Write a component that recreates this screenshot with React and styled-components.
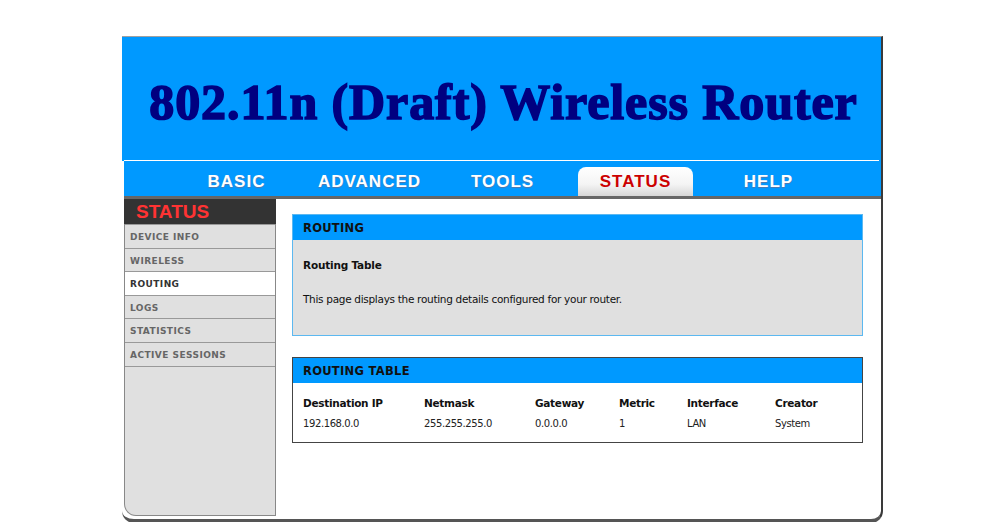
import React from "react";
import styled, { createGlobalStyle } from "styled-components";

const GlobalStyle = createGlobalStyle`
  body {
    margin: 0;
    background: #ffffff;
    font-family: "Liberation Sans", Arial, sans-serif;
  }
`;

const navItems = ["BASIC", "ADVANCED", "TOOLS", "STATUS", "HELP"];
const sideItems = [
  "DEVICE INFO",
  "WIRELESS",
  "ROUTING",
  "LOGS",
  "STATISTICS",
  "ACTIVE SESSIONS",
];
const columns = ["Destination IP", "Netmask", "Gateway", "Metric", "Interface", "Creator"];
const widths = [121, 111, 84, 68, 88, 76];
const routes = [["192.168.0.0", "255.255.255.0", "0.0.0.0", "1", "LAN", "System"]];

function App() {
  return (
    <>
      <GlobalStyle />
      <Page>
        <Frame>
          <Header>
            <Title>802.11n (Draft) Wireless Router</Title>
          </Header>
          <Divider />
          <Nav>
            {navItems.map((item) => (
              <NavItem key={item}>
                <NavLabel $active={item === "STATUS"}>{item}</NavLabel>
              </NavItem>
            ))}
          </Nav>
          <Body>
            <Sidebar>
              <SideTitle>STATUS</SideTitle>
              {sideItems.map((item) => (
                <SideItem key={item} $active={item === "ROUTING"}>
                  {item}
                </SideItem>
              ))}
            </Sidebar>
            <Main>
              <Box $variant="info">
                <BoxHead>ROUTING</BoxHead>
                <InfoBody>
                  <Strong>Routing Table</Strong>
                  <Text>This page displays the routing details configured for your router.</Text>
                </InfoBody>
              </Box>
              <Box $variant="table">
                <BoxHead>ROUTING TABLE</BoxHead>
                <TableBody>
                  <Table>
                    <colgroup>
                      {widths.map((w, i) => (
                        <col key={i} style={{ width: w }} />
                      ))}
                    </colgroup>
                    <thead>
                      <tr>
                        {columns.map((c) => (
                          <Th key={c}>{c}</Th>
                        ))}
                      </tr>
                    </thead>
                    <tbody>
                      {routes.map((r, i) => (
                        <tr key={i}>
                          {r.map((v, j) => (
                            <Td key={j}>{v}</Td>
                          ))}
                        </tr>
                      ))}
                    </tbody>
                  </Table>
                </TableBody>
              </Box>
            </Main>
          </Body>
        </Frame>
      </Page>
    </>
  );
}

const Page = styled.div`
  padding: 36px 0 0 122px;
  width: 762px;
`;

const Frame = styled.div`
  width: 761px;
  background: #ffffff;
  border-top: 1px solid #a0a0a0;
  border-right: 2px solid #3a3a3a;
  border-bottom: 4px solid #555;
  border-radius: 0 0 12px 12px;
  box-sizing: border-box;
`;

const Header = styled.div`
  height: 123px;
  background: #0099ff;
  display: flex;
  align-items: center;
  justify-content: center;
  padding-top: 6px;
  box-sizing: border-box;
`;

const Title = styled.h1`
  margin: 0 0 0 4px;
  font-family: "Liberation Serif", "Times New Roman", serif;
  font-weight: 900;
  font-size: 50px;
  letter-spacing: 0.9px;
  color: #000080;
  -webkit-text-stroke: 1.6px #000080;
  white-space: nowrap;
`;

const Divider = styled.div`
  height: 1px;
  background: #0099ff;
  padding: 0 2px;
  &::before {
    content: "";
    display: block;
    height: 1px;
    background: #ffffff;
  }
`;

const Nav = styled.div`
  height: 35px;
  background: #0099ff;
  display: flex;
  align-items: flex-end;
  padding-left: 46px;
  border-bottom: 3px solid #666;
  margin-left: 2px;
`;

const NavItem = styled.div`
  width: 133px;
  height: 29px;
  display: flex;
  justify-content: center;
`;

const NavLabel = styled.div`
  width: 115px;
  height: 29px;
  line-height: 30px;
  text-align: center;
  font-family: "Liberation Sans", Arial, sans-serif;
  font-weight: bold;
  font-size: 17px;
  letter-spacing: 1px;
  border-radius: 8px 8px 0 0;
  color: ${(p) => (p.$active ? "#cc0000" : "#ffffff")};
  background: ${(p) =>
    p.$active ? "linear-gradient(#ffffff 0%, #f4f4f4 60%, #d6d6d6 100%)" : "transparent"};
  text-shadow: ${(p) => (p.$active ? "none" : "0 1px 1px #5577aa")};
`;

const Body = styled.div`
  display: flex;
  padding-left: 2px;
  height: 320px;
`;

const Sidebar = styled.div`
  width: 152px;
  height: 317px;
  background: #e0e0e0;
  border: 1px solid #888;
  border-top: none;
  border-radius: 0 0 0 12px;
  box-sizing: border-box;
`;

const SideTitle = styled.div`
  height: 25px;
  background: #333333;
  color: #ff3333;
  font-family: "Liberation Sans", Arial, sans-serif;
  font-weight: bold;
  font-size: 19px;
  line-height: 25px;
  padding-left: 12px;
  margin: 0 -1px;
`;

const SideItem = styled.div`
  height: 22.6px;
  line-height: 24px;
  border-top: 1px solid #999;
  background: ${(p) => (p.$active ? "#ffffff" : "#e0e0e0")};
  color: ${(p) => (p.$active ? "#333" : "#666")};
  font-family: "DejaVu Sans", Verdana, sans-serif;
  font-weight: bold;
  font-size: 9px;
  letter-spacing: 0.45px;
  padding-left: 5px;
  &:last-child {
    border-bottom: 1px solid #999;
  }
`;

const Main = styled.div`
  flex: 1;
  padding: 15px 16px 0 16px;
  display: flex;
  flex-direction: column;
  gap: 21px;
`;

const Box = styled.div`
  width: 571px;
  border: 1px solid ${(p) => (p.$variant === "info" ? "#5cb8f0" : "#444")};
  background: ${(p) => (p.$variant === "info" ? "#e0e0e0" : "#ffffff")};
  box-sizing: border-box;
`;

const BoxHead = styled.div`
  height: 25px;
  line-height: 27px;
  background: #0099ff;
  color: #111;
  font-family: "DejaVu Sans", Tahoma, sans-serif;
  font-weight: bold;
  font-size: 11.5px;
  letter-spacing: 0.3px;
  padding-left: 10px;
`;

const InfoBody = styled.div`
  height: 95px;
  padding: 19px 10px 0;
  box-sizing: border-box;
`;

const Strong = styled.div`
  font-family: "DejaVu Sans", Tahoma, sans-serif;
  font-weight: bold;
  font-size: 10.5px;
  color: #111;
  letter-spacing: -0.2px;
`;

const Text = styled.div`
  margin-top: 22px;
  font-family: "DejaVu Sans", Tahoma, sans-serif;
  font-size: 10.5px;
  color: #111;
  letter-spacing: -0.3px;
`;

const TableBody = styled.div`
  padding: 14px 10px 13px;
`;

const Table = styled.table`
  border-collapse: collapse;
  table-layout: fixed;
`;

const Th = styled.th`
  text-align: left;
  padding: 0 0 9px;
  font-family: "DejaVu Sans", Tahoma, sans-serif;
  font-weight: bold;
  font-size: 10.5px;
  color: #111;
  letter-spacing: -0.3px;
  white-space: nowrap;
`;

const Td = styled.td`
  padding: 0;
  font-family: "DejaVu Sans", Tahoma, sans-serif;
  font-size: 10px;
  color: #222;
  letter-spacing: -0.4px;
  white-space: nowrap;
`;

export default App;
